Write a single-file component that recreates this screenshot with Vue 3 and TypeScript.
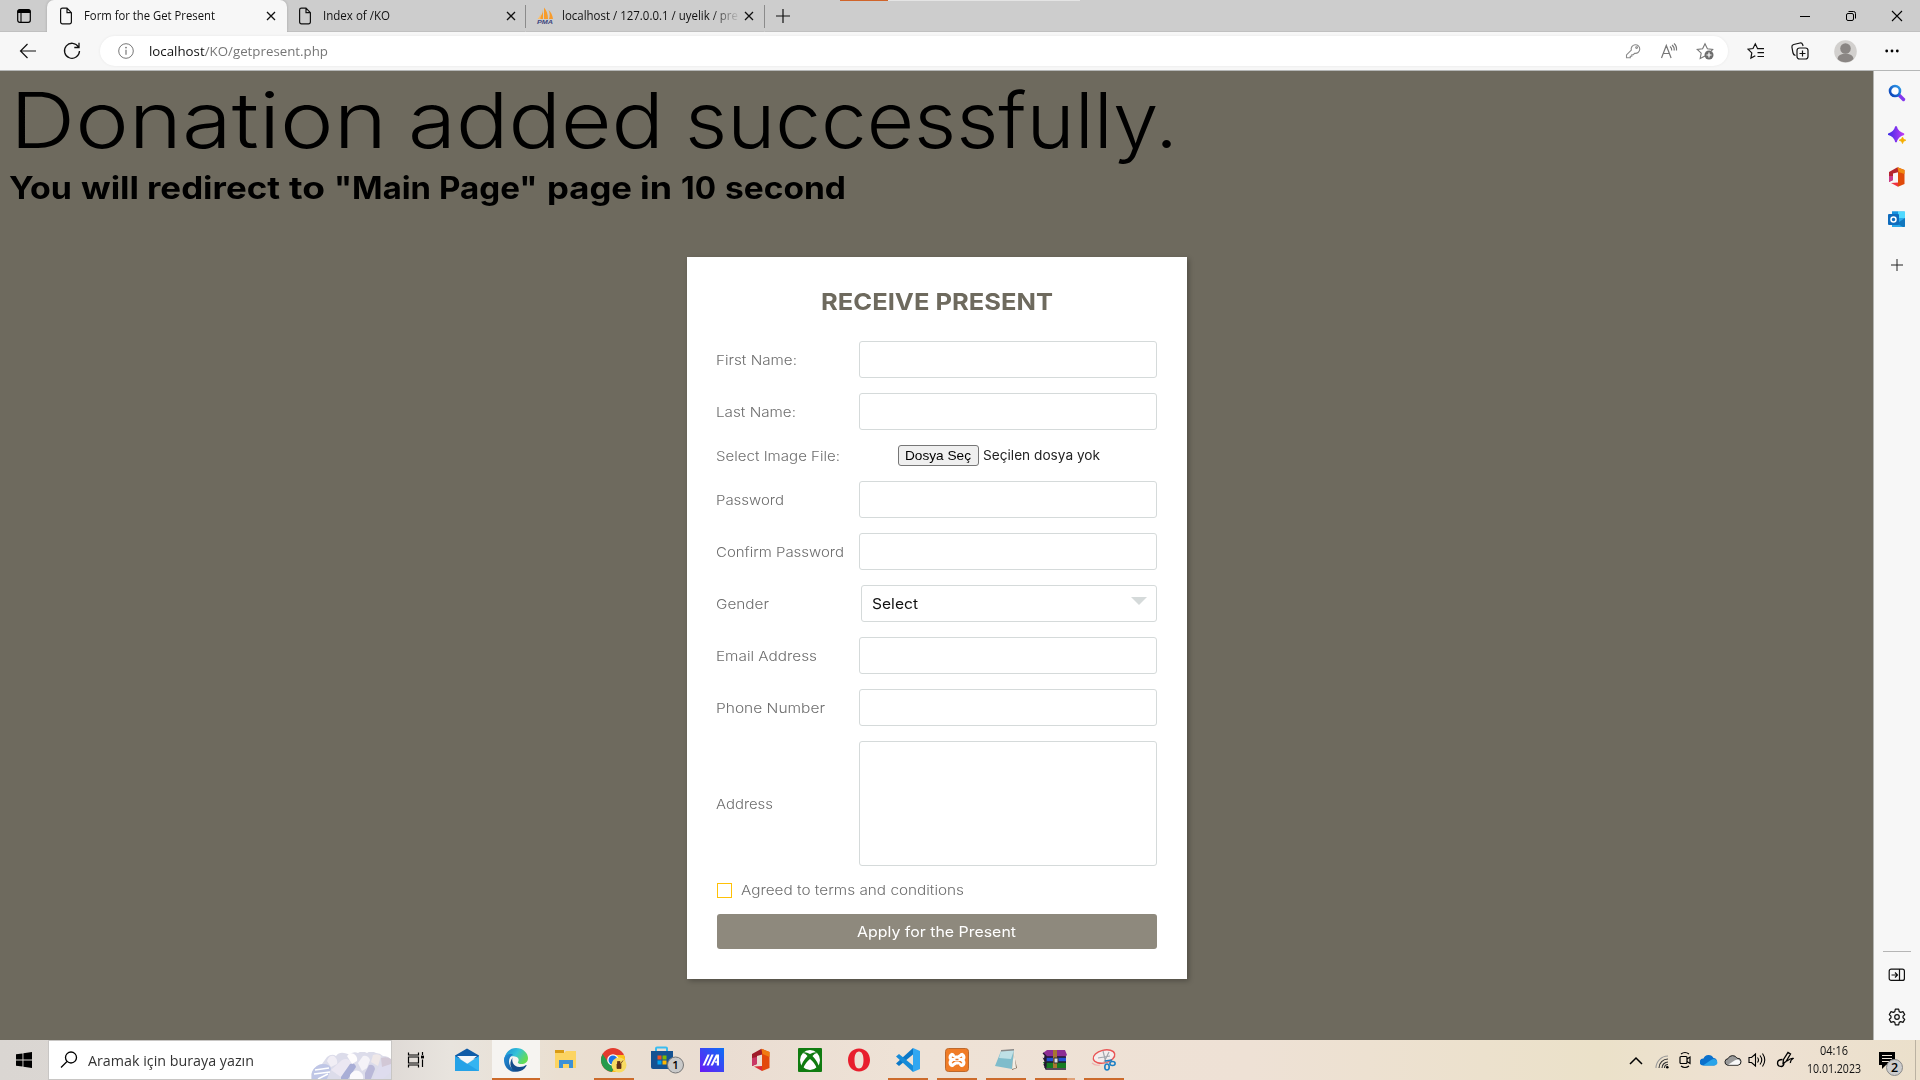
<script setup lang="ts">
import { ref } from 'vue'

interface Field {
  label: string
  width: number
  kind: 'text' | 'password' | 'file' | 'select' | 'area'
}

interface Word {
  text: string
  width: number
}

const titleWords: Word[] = [
  { text: 'Donation', width: 377 },
  { text: 'added', width: 256 },
  { text: 'successfully.', width: 493 },
]

const subtitleWords: Word[] = [
  { text: 'You', width: 63 },
  { text: 'will', width: 58 },
  { text: 'redirect', width: 133 },
  { text: 'to', width: 36 },
  { text: '"Main', width: 97 },
  { text: 'Page"', width: 98.5 },
  { text: 'page', width: 85 },
  { text: 'in', width: 32 },
  { text: '10', width: 35 },
  { text: 'second', width: 121 },
]

const fields: Field[] = [
  { label: 'First Name:', width: 81, kind: 'text' },
  { label: 'Last Name:', width: 80, kind: 'text' },
  { label: 'Select Image File:', width: 124, kind: 'file' },
  { label: 'Password', width: 68, kind: 'password' },
  { label: 'Confirm Password', width: 128, kind: 'password' },
  { label: 'Gender', width: 53, kind: 'select' },
  { label: 'Email Address', width: 101, kind: 'text' },
  { label: 'Phone Number', width: 109, kind: 'text' },
  { label: 'Address', width: 57, kind: 'area' },
]

const agreed = ref(false)

/* Scales a piece of text horizontally so that it takes up the given width in pixels. */
const vFit = {
  mounted(el: HTMLElement, binding: { value: number }) {
    const natural = el.getBoundingClientRect().width
    if (natural > 0) {
      el.style.transform = `scaleX(${binding.value / natural})`
      el.style.marginRight = `${binding.value - natural}px`
    }
  },
}
</script>

<template>
  <div class="screen">
    <header class="tabs">
      <div class="tab-menu">
        <svg width="16" height="16" viewBox="0 0 16 16"><rect x="1.7" y="1.7" width="12.6" height="12.6" rx="2" fill="none" stroke="#000" stroke-width="1.2" /><path d="M1.5 5V3.5a2 2 0 0 1 2-2h9a2 2 0 0 1 2 2V5z" /><path d="M5 5v9" stroke="#000" stroke-width="1.1" /></svg>
      </div>
      <div class="tab active">
        <svg class="page" width="14" height="18" viewBox="0 0 14 18"><path d="M1.6 3a1.8 1.8 0 0 1 1.8-1.8H8l4.4 4.5V15a1.8 1.8 0 0 1-1.8 1.8H3.4A1.8 1.8 0 0 1 1.6 15zM8 1.2V5.7h4.4" fill="none" stroke="#111" stroke-width="1.2" /></svg>
        <span class="tab-title"><span v-fit="131" class="fit">Form for the Get Present</span></span>
        <svg width="10" height="10" viewBox="0 0 10 10"><path d="M1 1l8 8M9 1L1 9" stroke="#111" stroke-width="1.3" /></svg>
      </div>
      <div class="tab second">
        <svg class="page" width="14" height="18" viewBox="0 0 14 18"><path d="M1.6 3a1.8 1.8 0 0 1 1.8-1.8H8l4.4 4.5V15a1.8 1.8 0 0 1-1.8 1.8H3.4A1.8 1.8 0 0 1 1.6 15zM8 1.2V5.7h4.4" fill="none" stroke="#111" stroke-width="1.2" /></svg>
        <span class="tab-title"><span v-fit="67" class="fit">Index of /KO</span></span>
        <svg width="10" height="10" viewBox="0 0 10 10"><path d="M1 1l8 8M9 1L1 9" stroke="#111" stroke-width="1.3" /></svg>
      </div>
      <div class="tab third">
        <svg class="page" width="18" height="18" viewBox="0 0 18 18"><path d="M7 2.5C7 6 5 10 2 12h5zM8 .5V12h4C12 7 10.5 3 8 .5zM12.5 3c1.5 3 1.500 6 .5 9h4c-.5-4-2-7-4.500-9z" fill="#f89c2c" /><path d="M4.500 5C4.500 8 3.500 10 1.500 12h3z" fill="#fbc16f" /><text x="1" y="17.3" font-size="6.2" font-weight="bold" font-style="italic" font-family="Liberation Sans, sans-serif" fill="#3d4680" textLength="16" lengthAdjust="spacingAndGlyphs">PMA</text></svg>
        <span class="tab-title fade"><span v-fit="176" class="fit">localhost / 127.0.0.1 / uyelik / pre</span></span>
        <svg width="10" height="10" viewBox="0 0 10 10"><path d="M1 1l8 8M9 1L1 9" stroke="#111" stroke-width="1.3" /></svg>
      </div>
      <div class="new-tab"><svg width="14" height="14" viewBox="0 0 14 14"><path d="M7 0v14M0 7h14" stroke="#111" stroke-width="1.2" /></svg></div>
      <div class="spacer"></div>
      <div class="win-btn"><svg width="10" height="10" viewBox="0 0 10 10"><path d="M0 5.500h10" stroke="#000" /></svg></div>
      <div class="win-btn"><svg width="12" height="12" viewBox="0 0 12 12" fill="none" stroke="#000"><rect x="1.500" y="3.500" width="7" height="7" rx="1.5" /><path d="M3.500 1.500H8.500a2 2 0 0 1 2 2V8.500" /></svg></div>
      <div class="win-btn"><svg width="12" height="12" viewBox="0 0 12 12"><path d="M1 1l10 10M11 1L1 11" stroke="#000" stroke-width="1.1" /></svg></div>
      <div class="load-strip"></div>
    </header>

    <div class="toolbar">
      <div class="nav back"><svg width="18" height="16" viewBox="0 0 18 16"><path d="M8.500 1L1.500 8l7 7M1.500 8H17" fill="none" stroke="#111" stroke-width="1.2" /></svg></div>
      <div class="nav reload"><svg width="18" height="18" viewBox="0 0 18 18"><path d="M15.500 5A7.500 7.500 0 1 0 16.500 9M16 .8V5.500H11.300" fill="none" stroke="#111" stroke-width="1.3" /></svg></div>
      <div class="address">
        <svg width="16" height="16" viewBox="0 0 16 16"><circle cx="8" cy="8" r="7.3" fill="none" stroke="#777" /><path d="M8 6.800v5" stroke="#777" stroke-width="1.2" /><circle cx="8" cy="4.600" r=".9" fill="#777" /></svg>
        <span class="url"><span v-fit="179" class="fit">localhost<i>/KO/getpresent.php</i></span></span>
        <svg class="ai" width="18" height="18" viewBox="0 0 18 18" fill="none" stroke="#8a8a8a" stroke-width="1.1"><path d="M7.300 8.200a4.300 4.300 0 1 1 3.300 3.100L9.300 12.700H7.800v1.500H6.300v1.600H2.500v-2.900z" /><circle cx="12.600" cy="5.600" r=".9" /></svg>
        <svg class="ai" width="18" height="18" viewBox="0 0 18 18" fill="none" stroke="#777" stroke-width="1.2"><path d="M1.500 16L6.300 3.500 11.100 16M3.100 11.500h6.400M10 4.500q2 1.500 1.700 4M12 3q2.500 2 2.200 5.500M14 1.500q3 2.500 2.500 7" /></svg>
        <svg class="ai" width="18" height="18" viewBox="0 0 18 18"><path d="M9 14l-4.800 2.500 1-5.300-4-3.800 5.400-.7L9 1.800l2.400 4.900 5.300.7-1.500 1.600" fill="none" stroke="#777" stroke-width="1.1" /><circle cx="13" cy="13" r="4.5" fill="#6d6d6d" /><path d="M13 10.500v5M10.500 13h5" stroke="#fff" stroke-width="1.2" /></svg>
      </div>
      <div class="tool fav"><svg width="18" height="18" viewBox="0 0 18 18" fill="none" stroke="#111" stroke-width="1.2"><path d="M8.300 13.800l-4.400 2.300.9-5.200L1 7.200l5-.7 2.300-4.700 2.300 4.900H17M10.500 10.700H17M10.500 14.500H17" /></svg></div>
      <div class="tool coll"><svg width="18" height="18" viewBox="0 0 18 18" fill="none" stroke="#111" stroke-width="1.2"><rect x="6" y="6" width="11" height="11" rx="2.5" /><path d="M11.500 8.500v6M8.500 11.500h6M4.500 13.500Q2.500 13 2 11L.9 5Q.7 3 2.700 2.500L9 1q2-.3 2.600 1.500l.5 1.500" /></svg></div>
      <div class="tool avatar"><svg width="23" height="23" viewBox="0 0 23 23"><circle cx="11.500" cy="11.500" r="11.300" fill="#d2d0ce" /><circle cx="11.500" cy="8.500" r="5.300" fill="#8a8684" /><path d="M3.500 19a8 5.500 0 0 1 16 0 11.300 11.300 0 0 1-16 0z" fill="#8a8684" /></svg></div>
      <div class="tool dots"><svg width="14" height="4" viewBox="0 0 14 4"><circle cx="1.700" cy="2" r="1.400" /><circle cx="7" cy="2" r="1.400" /><circle cx="12.300" cy="2" r="1.400" /></svg></div>
    </div>

    <div class="body">
      <main class="content">
        <h1 class="title"><span v-for="w in titleWords" :key="w.text" v-fit="w.width" class="fit">{{ w.text }}</span></h1>
        <h2 class="subtitle"><span v-for="w in subtitleWords" :key="w.text" v-fit="w.width" class="fit">{{ w.text }}</span></h2>
        <form class="card" @submit.prevent>
          <h3 class="card-title"><span v-fit="232" class="fit">RECEIVE PRESENT</span></h3>
          <div v-for="f in fields" :key="f.label" class="row" :class="'row-' + f.kind">
            <label><span v-fit="f.width" class="fit">{{ f.label }}</span></label>
            <div v-if="f.kind === 'file'" class="file">
              <button type="button"><span v-fit="66" class="fit">Dosya Seç</span></button>
              <span v-fit="117" class="fit file-name">Seçilen dosya yok</span>
            </div>
            <div v-else-if="f.kind === 'select'" class="select">
              <span v-fit="46" class="fit">Select</span>
              <i class="arrow"></i>
            </div>
            <textarea v-else-if="f.kind === 'area'"></textarea>
            <input v-else :type="f.kind">
          </div>
          <label class="terms" @click="agreed = !agreed">
            <i class="box" :class="{ checked: agreed }"></i>
            <span v-fit="223" class="fit">Agreed to terms and conditions</span>
          </label>
          <button class="apply" type="submit"><span v-fit="159" class="fit">Apply for the Present</span></button>
        </form>
      </main>
      <aside class="side">
        <svg width="18" height="18" viewBox="0 0 18 18"><defs><linearGradient id="sg" x1="0" y1="1" x2="1" y2="0"><stop stop-color="#0a3fb8" /><stop offset="1" stop-color="#2f9be8" /></linearGradient></defs><path d="M10.500 10.500l5 5" stroke="#8338ec" stroke-width="3.4" stroke-linecap="round" /><circle cx="7" cy="7" r="5" fill="#fff" stroke="url(#sg)" stroke-width="2.6" /></svg>
        <svg width="18" height="18" viewBox="0 0 18 18"><defs><linearGradient id="sp"><stop stop-color="#3f2be8" /><stop offset="1" stop-color="#c23cf5" /></linearGradient></defs><path d="M8 .5Q9.500 6.500 16 8.200 9.500 9.800 8 16 6.500 9.800.5 8.200 6.500 6.500 8 .5z" fill="url(#sp)" stroke="url(#sp)" stroke-width="1.6" /><path d="M14.500 11q.5 2.800 3.500 3.200-3 .5-3.500 3.500-.5-3-3.500-3.500 3-.4 3.500-3.200z" fill="#f5ae00" stroke="#f5ae00" stroke-width=".6" /></svg>
        <svg width="18" height="20" viewBox="0 0 18 20"><path d="M1 5l8-4.500 2 .5v4L5 6.500V13l-4 2z" fill="#b5262e" /><path d="M1 9v6l4-2V9z" fill="#c93c8c" /><path d="M9.500.3L16.500 3v14l-6.500 2.700V4z" fill="#e04a0a" /><path d="M9.500.3L16.500 3v4L10.500 5z" fill="#f08a12" /><path d="M3 16l7-.5v4.200z" fill="#ef3340" /></svg>
        <svg class="mailbox" width="18" height="18" viewBox="0 0 18 18"><path d="M4 1.500h12q1 0 1 1V16q0 1-1 1H4z" fill="#28a8ea" /><path d="M10 1.500h7V8h-7z" fill="#50d9ff" /><path d="M4 1.500h6V5H4z" fill="#1490df" /><path d="M17 8L9 13.500 15 17h1q1 0 1-1z" fill="#1177be" /><rect y="4" width="11" height="11" rx="1" fill="#0f6cbd" /><circle cx="5.500" cy="9.500" r="2.5" fill="none" stroke="#fff" stroke-width="1.5" /></svg>
        <svg class="add" width="14" height="14" viewBox="0 0 14 14"><path d="M7 1v12M1 7h12" stroke="#222" /></svg>
        <div class="grow"></div>
        <hr>
        <svg class="panel" width="18" height="14" viewBox="0 0 18 14" fill="none" stroke="#111" stroke-width="1.2"><rect x="1.200" y="1.200" width="15.200" height="11.200" rx="2" /><path d="M11.500 1v11.500M3.500 7H9M7 4.500L9.500 7 7 9.500" /></svg>
        <svg class="gear" width="18" height="18" viewBox="0 0 18 18" fill="none" stroke="#111" stroke-width="1.2"><circle cx="9" cy="9" r="2.3" /><path d="M7.300 1.200h3.400l.5 2.400 1.500.8 2.300-.8 1.700 3L15 8.200v1.600l1.700 1.600-1.700 3-2.300-.8-1.500.8-.5 2.400H7.300l-.5-2.400-1.500-.8-2.300.8-1.700-3L3 9.800V8.200L1.300 6.600l1.700-3 2.300.8 1.500-.8z" stroke-linejoin="round" /></svg>
      </aside>
    </div>

    <footer class="taskbar">
      <div class="start"><svg width="16" height="16" viewBox="0 0 16 16"><path d="M0 2.300L6.500 1.400V7.600H0zM7.400 1.200L16 0V7.600H7.400zM0 8.400H6.500V14.600L0 13.700zM7.400 8.400H16V16L7.400 14.800z" /></svg></div>
      <div class="search">
        <svg width="18" height="18" viewBox="0 0 18 18"><circle cx="11" cy="6.500" r="5.5" fill="none" stroke="#000" stroke-width="1.3" /><path d="M7 10.500L1 16.500" stroke="#000" stroke-width="1.3" /></svg>
        <span class="search-text"><span v-fit="166" class="fit">Aramak için buraya yazın</span></span>
        <svg class="crystals" width="80" height="27" viewBox="0 0 80 27"><path d="M0 27V22Q3 14 11 12L16 5q5-4 9-1 3-4 8-3t5 2q4-4 9-2 4-3 9 0 4-3 9 0 4 0 7 3 6 0 8 4v19z" fill="#dcdcea" /><path d="M1 20q4-8 11-8 7 0 8 5l-4 10H1z" fill="#bfc6e6" /><path d="M4 18l14-2M3 22l16-2M7 27l10-5" stroke="#fff" stroke-width="1.5" /><path d="M16 9q2-6 7-5 4 3 3 8l-6 3z" fill="#f1eef5" /><path d="M20 18L31 8q7-3 9 3L30 25z" fill="#ebe7f2" /><path d="M30 25l9-13q5-2 6 3l-8 12h-7z" fill="#a9aed6" /><path d="M36 4q3-4 7-2 4 3 3 7l-5 3z" fill="#fffdfd" /><path d="M47 11l5-7q5-1 7 4l-3 8-5 3z" fill="#f5f3f8" /><path d="M54 21l4-8q5-1 6 4l-4 10h-6z" fill="#b9b8d8" /><path d="M62 3q5-2 8 1l-3 10-7-4z" fill="#efe8e8" /><path d="M63 25l6-12q6-4 11-1v8l-8 7h-9z" fill="#dedcee" /><path d="M39 23q4-6 9-4 5 3 4 8H39z" fill="#fbf9fc" /><path d="M70 6q6-2 10 1v5l-9 3z" fill="#d2c8d6" /></svg>
      </div>
      <div class="app view"><svg width="18" height="18" viewBox="0 0 18 18" fill="none" stroke="#000" stroke-width="1.2"><path d="M1.500 1.500V4h10V1.500M1.500 16.500V14h10v2.500M1.500 6h10v6h-10zM15.500 1v3M15.500 8.500V16" /><path d="M14 6h3" stroke-width="2.800" /></svg></div>
      <div class="app"><svg width="24" height="24" viewBox="0 0 24 24"><path d="M0 7.500L12 .5l12 7v3H0z" fill="#0f5ca8" /><path d="M2 8h20l-10 8z" fill="#f4f7fa" /><path d="M0 8l12 8 12-8v15H0z" fill="#34b4f1" /><path d="M0 8v15h24z" fill="#1b98e2" opacity=".65" /></svg></div>
      <div class="app open current"><svg width="24" height="24" viewBox="0 0 24 24"><defs><linearGradient id="eg" x1="0" y1="0" x2="1" y2=".5"><stop stop-color="#168bd8" /><stop offset=".55" stop-color="#35c3d8" /><stop offset="1" stop-color="#63dc55" /></linearGradient><linearGradient id="eb" x1="0" y1="0" x2="1" y2="1"><stop stop-color="#2391dc" /><stop offset="1" stop-color="#114a8b" /></linearGradient></defs><path d="M.5 10C1.500 4 6.500 0 12 0c7 0 12 5 12 10 0 4-3 6-6.500 6-3 0-4-1-3.500-2 1.500-2 .5-5-3-5.500C6.500 8 2 8.500.5 12z" fill="url(#eg)" /><path d="M0 12c0-5 5-7 9-5.500-3 1.500-4 4.500-4 7 0 5 4 9.500 10 9.500C7 26 0 20 0 12z" fill="url(#eb)" /><path d="M8.500 9.500c-1 4 1 9.500 7 9.500 3 0 5-1 6.500-2 .5 0 .8.3.5.8C20.500 21.500 17 23.500 14 23.500 7 23.500 4 16 8.500 9.500z" fill="#134c8c" /></svg></div>
      <div class="app"><svg width="24" height="22" viewBox="0 0 24 22"><path d="M2 1h9v4H2z" fill="#d99b15" /><path d="M2 4h9l2-2h10v17H2z" fill="#fcd462" /><path d="M6 11h14v8h-4v-4h-6v4H6z" fill="#3b91d8" /></svg></div>
      <div class="app open"><svg width="28" height="26" viewBox="0 0 28 26"><circle cx="13" cy="13" r="12" fill="#e33b2e" /><path d="M2.600 7A12 12 0 0 0 12 25l5-9-9-1z" fill="#259b4c" /><path d="M13 8h11A12 12 0 0 1 12 25l6-9z" fill="#fbc61c" /><circle cx="13" cy="13" r="5.8" fill="#fff" /><circle cx="13" cy="13" r="4.5" fill="#1a73e8" /><circle cx="19" cy="18" r="7.5" fill="#f8db62" /><path d="M17 17h4v4.500h-4zM17.500 14.500h2.500V17h-2.500zM20.500 17l2.500-3.500" fill="#613016" stroke="#613016" stroke-width=".8" /></svg></div>
      <div class="app"><svg class="wide" width="34" height="28" viewBox="0 0 34 28"><path d="M6 6V2.500q0-1 1-1h9q1 0 1 1V6" fill="none" stroke="#3abcf0" stroke-width="2" /><path d="M1 5h22v16q0 2-2 2H3q-2 0-2-2z" fill="#145292" /><path d="M7.500 9.500h4v4h-4z" fill="#f25022" /><path d="M12.500 9.500h4v4h-4z" fill="#7fba00" /><path d="M7.500 14.500h4v4h-4z" fill="#00a4ef" /><path d="M12.500 14.500h4v4h-4z" fill="#ffb900" /><circle cx="25.500" cy="19" r="8" fill="#c9c9c9" stroke="#777" /><text x="25.500" y="23" text-anchor="middle" font-size="11.500" font-family="Open Sans, sans-serif" font-weight="600">1</text></svg></div>
      <div class="app"><svg width="24" height="24" viewBox="0 0 24 24"><defs><linearGradient id="ma" x1="0" y1="1" x2="1" y2="0"><stop stop-color="#6b19f5" /><stop offset="1" stop-color="#0b70f5" /></linearGradient></defs><rect width="24" height="24" fill="url(#ma)" /><path d="M2.500 17.500L7.500 6.500h2.200l-5 11zM6.500 17.500l5-11h2.200l-5 11zM10.500 17.500L16 6.500h3v11h-2.200V9.500l-4 8z" fill="#fff" /><path d="M15 14h3" stroke="#fff" stroke-width="1.5" /></svg></div>
      <div class="app"><svg width="20" height="24" viewBox="0 0 20 24"><path d="M1 6l9-5 3 1v4L6 8v8l-5 2z" fill="#a01c2a" /><path d="M1 10v8l5-2V9z" fill="#c93865" /><path d="M10.500.8L18.500 4v16l-7.500 3V5z" fill="#e3490b" /><path d="M10.500.8L18.500 4v5l-7-3z" fill="#f07c12" /><path d="M3 18.500l8-.5v5z" fill="#dc2c38" /></svg></div>
      <div class="app"><svg width="24" height="24" viewBox="0 0 24 24"><rect width="24" height="24" rx="1" fill="#107c10" /><circle cx="12" cy="12" r="10" fill="#fff" /><path d="M4 5Q7 3 12 6q5-3 8-1-3-.5-5.500 3 5.500 6 6 10-1 1.500-2 2-1.500-5-6.500-9-5 4-6.500 9-1-.5-2-2 .5-4 6-10Q7 4.500 4 5z" fill="#107c10" /></svg></div>
      <div class="app"><svg width="24" height="24" viewBox="0 0 24 24"><path fill-rule="evenodd" d="M12 .5c6.500 0 11 5 11 11.500S18.500 23.500 12 23.500 1 18.500 1 12 5.500.5 12 .5zM12 3.500C9 3.500 7.500 7 7.500 12s1.500 8.500 4.500 8.500 4.500-3.500 4.500-8.500S15 3.500 12 3.500z" fill="#e81e2d" /></svg></div>
      <div class="app open"><svg width="24" height="24" viewBox="0 0 24 24"><path d="M0 15.500L17 0v6.500L3 18z" fill="#0b78c8" /><path d="M0 8.500L3 6l14 11.500V24z" fill="#168bd8" /><path d="M17 0l7 3v18l-7 3z" fill="#31a7f1" /></svg></div>
      <div class="app open"><svg width="24" height="24" viewBox="0 0 24 24"><rect x=".5" y=".5" width="23" height="23" rx="3" fill="#f07c26" stroke="#bd692d" /><path d="M7 6.500l4 2.500h2l4-2.500M7 17.500l4-2.500h2l4 2.500M7.500 6.500a2.700 2.700 0 0 0-1 5h11a2.700 2.700 0 0 0-1-5M7.500 17.500a2.700 2.700 0 0 1-1-5M16.500 17.500a2.700 2.700 0 0 0 1-5" fill="none" stroke="#fff" stroke-width="3.2" stroke-linecap="round" /><path d="M10.500 11.500h3M10.500 6v1.500M13.500 16.500V18" stroke="#e8762a" stroke-width="1.3" /></svg></div>
      <div class="app open"><svg width="24" height="24" viewBox="0 0 24 24"><path d="M19 3l4 17-5 2z" fill="#7c6754" /><path d="M7 3l13-1-2 19-17-3z" fill="#7fbccb" /><path d="M7 3l13-1-3 9-12-1z" fill="#bfe0e6" /><path d="M20 2l2 18-4 1z" fill="#f2ede4" /><path d="M7 2l13-1v1.500L7 3.500z" fill="#888" /></svg></div>
      <div class="app open multi"><svg width="26" height="22" viewBox="0 0 26 22"><path d="M1 4l4-3h18l2 5-2 2H4z" fill="#8d2d94" /><path d="M2 8h22v5H4z" fill="#2450d5" /><path d="M1 13h23v6H4z" fill="#167b22" /><path d="M1 4l3 3v4l-2-1 2 4v3l-2-2 2 5h20M4 8h20M4 13h20M3 6v13" fill="none" stroke="#231730" stroke-width="1.3" /><path d="M11 1h4v18h-4z" fill="#a7762f" /><path d="M12 9h4v5h-4z" fill="#ddd" stroke="#333" /></svg></div>
      <div class="app open"><svg width="26" height="24" viewBox="0 0 26 24"><ellipse cx="13" cy="8.500" rx="11" ry="6.3" transform="rotate(-14 13 8.500)" fill="#f4eeee" stroke="#e95656" stroke-width="1.4" /><path d="M12 3l3 12M7 10l12-2M18 4l-5 10" stroke="#a2a6ad" stroke-width="1.2" /><path d="M1 15q3 3 8 2" fill="none" stroke="#efb3b0" stroke-width="1.2" /><path d="M14 13l7-1" stroke="#1c7fc5" stroke-width="1.6" /><ellipse cx="16" cy="19" rx="2.2" ry="3" fill="none" stroke="#1c7fc5" stroke-width="1.6" /><ellipse cx="21.500" cy="15.500" rx="2.6" ry="2" fill="none" stroke="#1c7fc5" stroke-width="1.6" /></svg></div>
      <div class="spacer"></div>
      <div class="tray">
        <svg width="14" height="9" viewBox="0 0 14 9"><path d="M1 8l6-6 6 6" fill="none" stroke="#000" stroke-width="1.5" /></svg>
        <svg class="wifi" width="14" height="14" viewBox="0 0 14 14" fill="none" stroke="#333" stroke-width="1.1"><path d="M1 13A12 12 0 0 1 13 1" stroke="#999" /><path d="M4 13a9 9 0 0 1 9-9M7 13a6 6 0 0 1 6-6M9.500 13a3.500 3.500 0 0 1 3.500-3.500" /><circle cx="12.300" cy="12.300" r="1.3" fill="#000" stroke="none" /></svg>
        <svg width="12" height="18" viewBox="0 0 12 18" fill="none" stroke="#000" stroke-width="1.2"><path d="M2 3q4-3 8 0M2 15q4 3 8 0" /><rect x="1" y="5.500" width="7" height="7" rx="1" /><path d="M8 8l3-2v6.500L8 10.500" /></svg>
        <svg class="drive" width="18" height="12" viewBox="0 0 18 12"><path d="M3 11.500A3.500 3.500 0 0 1 3.500 4.500 5.500 5.500 0 0 1 13.500 4 3.800 3.800 0 0 1 14 11.500z" fill="#0a70cc" /><path d="M3 11.500L11 6q4-2.500 6 1 1.500 4-3 4.500z" fill="#29a4ea" /></svg>
        <svg class="cloud" width="18" height="12" viewBox="0 0 18 12"><path d="M3.500 11.200A3.300 3.300 0 0 1 4 4.700 5 5 0 0 1 13 4.200a3.500 3.500 0 0 1 1 7z" fill="#999" stroke="#222" /><path d="M4 10.700l7-4.500q4-2 5 1 .5 3-2.500 3.500z" fill="#f8f8f8" /></svg>
        <svg class="sound" width="18" height="16" viewBox="0 0 18 16" fill="none" stroke="#000" stroke-width="1.1"><path d="M1 5.500h2.500L7.500 2v12l-4-3.500H1zM9.500 5.500q2 2.500 0 5M12 3.500q3.500 4.500 0 9M14.500 1.500q4.500 6.500 0 13" /></svg>
        <svg class="pen" width="18" height="18" viewBox="0 0 18 18" fill="none" stroke="#000" stroke-width="1.3"><path d="M7 12.500l.5-4L12 1.500l2.500 1.500L10 10.500zM6.500 8.500Q1.500 8.500 1.500 12t4 3.500q2.500-.5 2.500-3.500M11 10q4-3 6-2.500-3 2-2.500 4.500" /></svg>
      </div>
      <div class="clock"><span v-fit="28" class="fit">04:16</span><span v-fit="54" class="fit">10.01.2023</span></div>
      <div class="note"><svg width="26" height="26" viewBox="0 0 26 26"><path d="M1 1h16v13H8l-4 4v-4H1z" /><path d="M4 4.500h10M4 7.500h10M4 10.500h7" stroke="#f0e6d8" stroke-width="1.2" /><circle cx="16.500" cy="16.500" r="8" fill="#ccc" stroke="#888" /><text x="16.500" y="20.800" text-anchor="middle" font-size="12.500" font-weight="600" font-family="Open Sans, sans-serif">2</text></svg></div>
    </footer>
  </div>
</template>

<style>
body { margin: 0; overflow: hidden; }
</style>

<style scoped>
* { box-sizing: border-box; }
.screen { width: 1920px; height: 1080px; display: flex; flex-direction: column; font-family: "Open Sans", "Noto Sans", sans-serif; font-size: 12px; color: #111; overflow: hidden; }
svg { flex: none; display: block; }
.fit { display: inline-block; flex: none; white-space: nowrap; transform-origin: left center; }
.spacer, .grow { flex: 1; }

.tabs { position: relative; height: 32px; display: flex; background: #cdcdcd; border-bottom: 1px solid #c0c0c0; }
.tab-menu { width: 47px; display: flex; align-items: center; justify-content: center; }
.tab { width: 239px; height: 32px; display: flex; align-items: center; padding: 0 11px 0 12px; border-right: 1px solid #8b8b8b; border-image: linear-gradient(#cdcdcd 18%, #8b8b8b 18%, #8b8b8b 84%, #cdcdcd 84%) 1; }
.tab.active { width: 240px; background: #f7f7f7; border: 0; border-radius: 7px 7px 0 0; box-shadow: 0 0 3px #0003; clip-path: inset(-3px -3px 0 -3px); }
.tab.second { padding-left: 11px; padding-right: 9px; }
.tab.third { padding-left: 10px; padding-right: 10px; }
.tab .page { margin-right: 11px; }
.tab.third .page { margin-right: 8px; }
.tab-title { flex: 1; min-width: 0; overflow: hidden; line-height: 20px; }
.fade { mask-image: linear-gradient(90deg, #000 82%, transparent 98%); }
.new-tab { width: 36px; display: flex; align-items: center; justify-content: center; }
.win-btn { width: 46px; display: flex; align-items: center; justify-content: center; }
.load-strip { position: absolute; left: 840px; top: 0; width: 240px; height: 1px; background: linear-gradient(90deg, #d0642a 48px, #e4e4e4 48px); }

.toolbar { height: 39px; display: flex; align-items: center; background: #f7f7f7; border-bottom: 1px solid #b5b7b7; }
.nav { display: flex; }
.back { margin-left: 19px; }
.reload { margin-left: 26px; }
.address { width: 1628px; height: 30px; margin-left: 19px; padding: 0 14px 0 18px; display: flex; align-items: center; background: #fff; border-radius: 15px; box-shadow: 0 0 3px #0001; }
.url { flex: 1; margin-left: 15px; font-size: 13.5px; line-height: 20px; }
.url i { font-style: normal; color: #767676; }
.ai + .ai { margin-left: 18px; }
.fav { margin-left: 19px; }
.coll { margin-left: 26px; }
.avatar { margin-left: 25px; }
.dots { margin-left: 28px; }

.body { height: 969px; display: flex; }
.content { width: 1874px; background: #6e6a5e; border-right: 1px solid #b4b5b2; font-family: Inter, "Open Sans", sans-serif; }
.title { margin: 1px 0 0 10px; height: 96px; display: flex; gap: 21px; line-height: 96px; font-size: 77px; font-weight: 300; color: #000; }
.subtitle { margin: 1px 0 0 9px; height: 38px; display: flex; gap: 8.7px; line-height: 38px; font-size: 31px; font-weight: 700; color: #000; }
.card { width: 500px; height: 722px; margin: 50px auto 0; padding: 30px; background: #fff; box-shadow: 2px 2px 5px #0004; display: flex; flex-direction: column; gap: 15px; color: #6e6e6e; font-size: 13.5px; }
.card-title { flex: none; height: 39px; line-height: 29px; margin: 0; text-align: center; font-size: 23.5px; font-weight: 700; color: #6e6a5e; }
.row { height: 37px; display: flex; align-items: center; flex: none; }
.row label { width: 143px; margin-left: -1px; line-height: 18px; white-space: nowrap; font-weight: 350; }
.row input, .row textarea, .select { width: 298px; height: 100%; margin: 0; padding: 0 10px; border: 1px solid #d5dada; border-radius: 3px; background: #fff; resize: none; outline: 0; }
.row-area { height: 125px; }
.row-file { height: 21px; }
.file { display: flex; align-items: center; margin-left: 39px; color: #222; font-size: 13px; gap: 4px; }
.file-name { padding-bottom: 1px; }
.file button { width: 81px; height: 21px; padding: 0; border: 1px solid #767676; border-radius: 3px; background: #efefef; color: #000; font: 13.33px "Liberation Sans", Arial, sans-serif; display: flex; align-items: center; justify-content: center; }
.row .select { width: 296px; margin-left: 2px; padding-right: 9px; display: flex; align-items: center; justify-content: space-between; color: #111; font-size: 14.5px; }
.arrow { width: 0; height: 0; margin-top: -6px; border: 8px solid transparent; border-top-color: #d5dada; border-bottom: 0; }
.terms { flex: none; height: 18px; display: flex; align-items: center; gap: 9px; font-weight: 350; }
.box { width: 15px; height: 15px; border: 1px solid #ffc107; margin-top: 1px; }
.box.checked { background: #ffc107; }
.apply { height: 35px; padding: 0; flex: none; border: 0; border-radius: 3px; background: #8e897d; color: #fff; font: 14.5px Inter, sans-serif; }

.side { width: 46px; padding-top: 13px; background: #f7f7f7; display: flex; flex-direction: column; align-items: center; }
.side svg + svg { margin-top: 23.5px; }
.side svg.mailbox { margin-top: 22.5px; }
.side svg.add { margin-top: 30px; }
.side hr { width: 28px; height: 1px; margin: 0; border: 0; background: #b5b5b5; }
.side .panel { margin-top: 16px; }
.side svg.gear { margin: 26px 0 14px; }

.taskbar { height: 40px; display: flex; background: linear-gradient(90deg, #dad6d2 0, #dfdad6 390px, #e8e4de 450px, #eadfd1 560px, #eaddd2 720px, #eee2d6 900px, #eee1d5 1250px, #ebe1c9 1600px, #eee1d3 1750px, #ebe0cb 1920px); }
.start { width: 48px; display: flex; align-items: center; justify-content: center; }
.search { width: 344px; height: 40px; display: flex; align-items: center; background: #fff; border: 1px solid #c8c6c4; padding-left: 11px; }
.search-text { flex: 1; margin-left: 10px; font-size: 15px; color: #333; }
.crystals { align-self: flex-end; }
.app { width: 49px; height: 40px; flex: none; display: flex; align-items: center; justify-content: center; border-bottom: 2px solid transparent; padding-top: 2px; }
.app.view { width: 50px; padding-right: 3px; }
.app.open { background: linear-gradient(#cc6b2c, #cc6b2c) center bottom / 40px 2px no-repeat border-box; }
.app.current { background: linear-gradient(#cc6b2c, #cc6b2c) right bottom / 48px 2px no-repeat border-box, linear-gradient(90deg, transparent 1px, #f6f4f1 1px) border-box; }
.app.multi { background-image: linear-gradient(90deg, #cc6b2c 32px, #dfa178 32px); }
.wide { margin-left: 8px; }
.tray { display: flex; align-items: center; gap: 7.5px; margin-right: 13px; }
.wifi { margin: 4px 3px 0 4px; }
.drive { margin-left: 1px; }
.cloud { margin-left: -1px; }
.sound { margin-left: -2px; }
.pen { margin-left: 3px; }
.clock { width: 54px; display: flex; flex-direction: column; align-items: center; justify-content: center; font-size: 12px; line-height: 18px; }
.note { width: 55px; padding: 11px 0 0 17px; border-right: 1px solid #bbb2a2; margin-right: 4px; }
</style>
